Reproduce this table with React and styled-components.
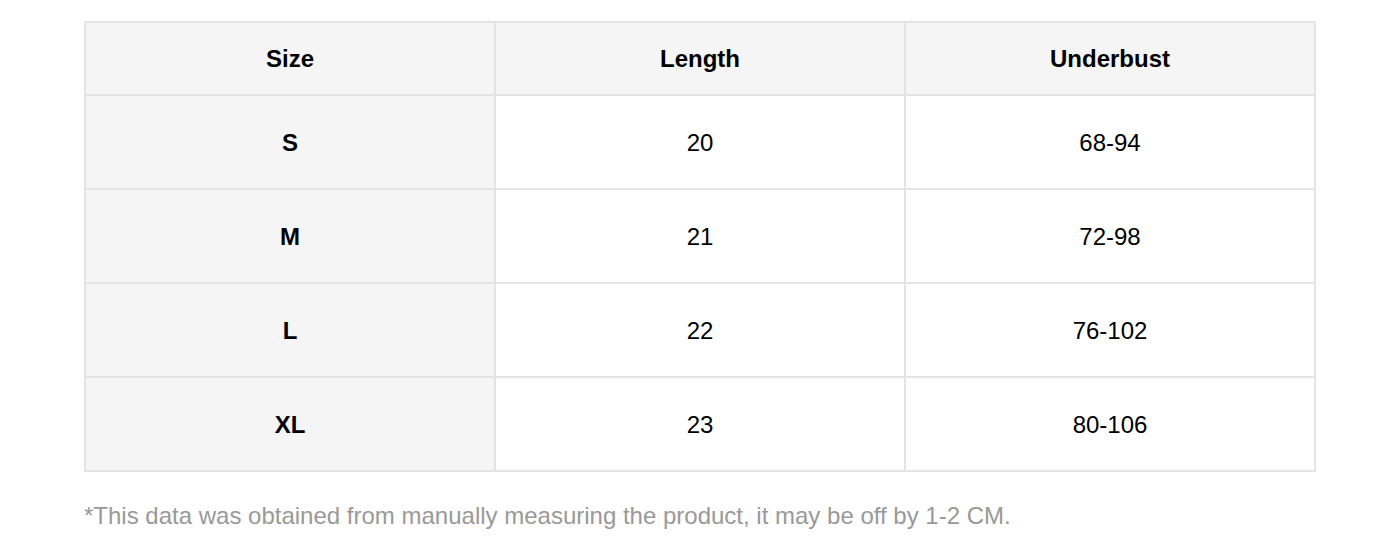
import React from "react";
import styled, { createGlobalStyle } from "styled-components";

const Global = createGlobalStyle`
  html, body { margin: 0; padding: 0; background: #ffffff; }
  body { font-family: "Liberation Sans", Arial, sans-serif; color: #000; }
`;

const Wrapper = styled.div`
  padding: 21px 82px 0 84px;
`;

const Table = styled.table`
  width: 100%;
  border-collapse: collapse;
  table-layout: fixed;
  border: 2px solid #e4e4e4;
`;

const HeadCell = styled.th`
  height: 71px;
  padding: 0;
  border: 2px solid #e4e4e4;
  background: #f5f5f5;
  font-size: 24px;
  font-weight: 700;
  text-align: center;
  vertical-align: middle;
`;

const Cell = styled.td`
  height: 90px;
  padding: 2px 0 0;
  border: 2px solid #e4e4e4;
  background: ${(p) => (p.$label ? "#f5f5f5" : "#ffffff")};
  font-size: 24px;
  font-weight: ${(p) => (p.$label ? 700 : 400)};
  text-align: center;
  vertical-align: middle;
`;

const Note = styled.p`
  margin: 30px 0 0;
  font-size: 24px;
  line-height: 28px;
  color: #999999;
`;

const rows = [
  ["S", "20", "68-94"],
  ["M", "21", "72-98"],
  ["L", "22", "76-102"],
  ["XL", "23", "80-106"],
];

export default function App() {
  return (
    <>
      <Global />
      <Wrapper>
        <Table>
          <thead>
            <tr>
              <HeadCell>Size</HeadCell>
              <HeadCell>Length</HeadCell>
              <HeadCell>Underbust</HeadCell>
            </tr>
          </thead>
          <tbody>
            {rows.map((r) => (
              <tr key={r[0]}>
                <Cell $label>{r[0]}</Cell>
                <Cell>{r[1]}</Cell>
                <Cell>{r[2]}</Cell>
              </tr>
            ))}
          </tbody>
        </Table>
        <Note>
          *This data was obtained from manually measuring the product, it may be off by 1-2 CM.
        </Note>
      </Wrapper>
    </>
  );
}
